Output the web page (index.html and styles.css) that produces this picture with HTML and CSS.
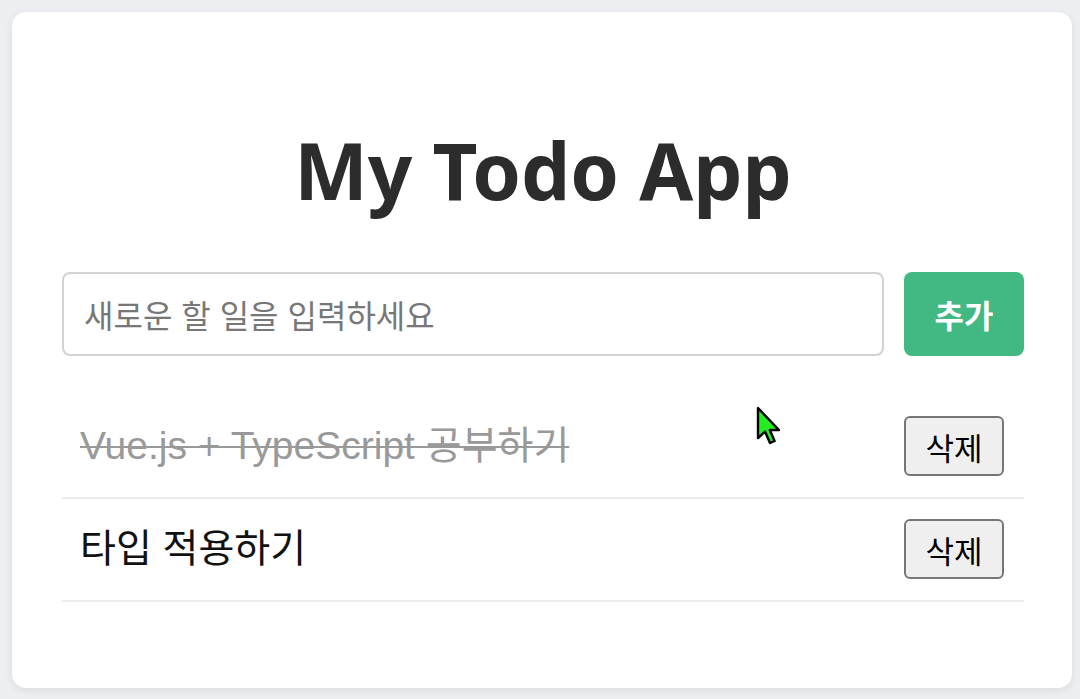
FILE: index.html
```html
<!DOCTYPE html>
<html lang="ko">
<head>
<meta charset="utf-8">
<title>My Todo App</title>
<link rel="stylesheet" href="styles.css">
</head>
<body>
<main class="card">
  <h1 class="title">My Todo App</h1>
  <div class="add-row">
    <input class="todo-input" type="text" placeholder="새로운 할 일을 입력하세요">
    <button class="add-btn">추가</button>
  </div>
  <ul class="todo-list">
    <li class="todo-item">
      <span class="todo-text done">Vue.js + TypeScript 공부하기</span>
      <button class="del-btn">삭제</button>
    </li>
    <li class="todo-item">
      <span class="todo-text">타입 적용하기</span>
      <button class="del-btn">삭제</button>
    </li>
  </ul>
</main>
<svg class="cursor" width="28" height="44" viewBox="0 0 14 22" aria-hidden="true">
  <path d="M1 1 L1 16 L4.5 12.8 L7 18.5 L9.3 17.5 L6.9 12 L11.5 12 Z" fill="#22ee22" stroke="#000" stroke-width="1.2" stroke-linejoin="round"/>
</svg>
</body>
</html>
```
FILE: styles.css
```css
html, body {
  margin: 0;
  padding: 0;
}
body {
  background: #eceef2;
  font-family: "Noto Sans", "Noto Sans CJK KR", sans-serif;
  padding: 12px 8px 11px 12px;
  box-sizing: border-box;
  height: 699px;
  position: relative;
}
.card {
  background: #fff;
  border-radius: 14px;
  box-shadow: 0 2px 8px rgba(0,0,0,0.08);
  padding: 1px 48px 0 50px;
  height: 676px;
  box-sizing: border-box;
}
.title {
  margin: 105px 0 0;
  text-align: center;
  font-size: 78px;
  line-height: 104px;
  font-weight: 700;
  color: #2c2c2c;
  font-family: "Noto Sans", "Noto Sans CJK KR", sans-serif;
}
.add-row {
  display: flex;
  gap: 20px;
  margin-top: 50px;
}
.todo-input {
  flex: 1;
  height: 84px;
  box-sizing: border-box;
  border: 2px solid #d2d2d2;
  border-radius: 8px;
  padding: 0 20px;
  font-size: 32px;
  font-family: "Noto Sans CJK KR", sans-serif;
  color: #333;
  outline: none;
}
.todo-input::placeholder {
  color: #777;
}
.add-btn {
  width: 120px;
  height: 84px;
  border: none;
  border-radius: 8px;
  background: #42b983;
  color: #fff;
  font-size: 32px;
  font-weight: 700;
  font-family: "Noto Sans CJK KR", sans-serif;
}
.todo-list {
  list-style: none;
  margin: 40px 0 0;
  padding: 0;
}
.todo-item {
  display: flex;
  align-items: center;
  justify-content: space-between;
  padding: 20px 20px 21px 18px;
  border-bottom: 2px solid #ececec;
}
.todo-text {
  font-size: 39px;
  line-height: 56px;
  font-family: "Liberation Sans", "Noto Sans CJK KR", sans-serif;
  color: #111;
}
.todo-text.done {
  color: #999;
  text-decoration: line-through;
  text-decoration-thickness: 2px;
}
.del-btn {
  width: 100px;
  height: 60px;
  box-sizing: border-box;
  background: #efefef;
  border: 2px solid #767676;
  border-radius: 6px;
  font-size: 31px;
  font-family: "Noto Sans CJK KR", sans-serif;
  color: #000;
  padding: 0;
}
.cursor {
  position: absolute;
  left: 756px;
  top: 406px;
}
```
